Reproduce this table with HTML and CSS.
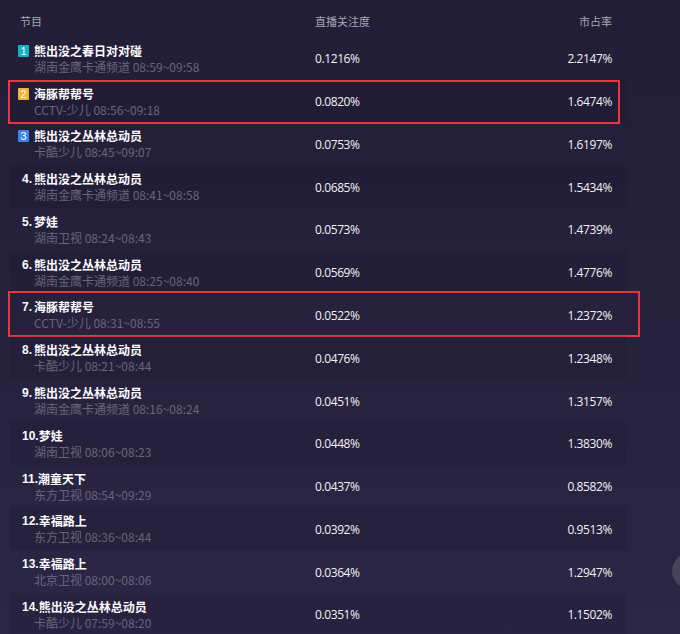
FILE: index.html
```html
<!DOCTYPE html>
<html lang="zh-CN">
<head>
<meta charset="utf-8">
<link rel="stylesheet" href="styles.css">
</head>
<body>
<div class="page">
  <div class="table">
    <div class="head">
      <div class="c1">节目</div>
      <div class="c2">直播关注度</div>
      <div class="c3">市占率</div>
    </div>

    <div class="row">
      <div class="c1"><div class="title"><span class="badge b1">1</span>熊出没之春日对对碰</div><div class="sub">湖南金鹰卡通频道 08:59~09:58</div></div>
      <div class="c2">0.1216%</div><div class="c3">2.2147%</div>
    </div>
    <div class="row alt">
      <div class="c1"><div class="title"><span class="badge b2">2</span>海豚帮帮号</div><div class="sub">CCTV-少儿 08:56~09:18</div></div>
      <div class="c2">0.0820%</div><div class="c3">1.6474%</div>
      <div class="mark m1"></div>
    </div>
    <div class="row">
      <div class="c1"><div class="title"><span class="badge b3">3</span>熊出没之丛林总动员</div><div class="sub">卡酷少儿 08:45~09:07</div></div>
      <div class="c2">0.0753%</div><div class="c3">1.6197%</div>
    </div>
    <div class="row alt">
      <div class="c1"><div class="title"><span class="num">4.</span>熊出没之丛林总动员</div><div class="sub">湖南金鹰卡通频道 08:41~08:58</div></div>
      <div class="c2">0.0685%</div><div class="c3">1.5434%</div>
    </div>
    <div class="row">
      <div class="c1"><div class="title"><span class="num">5.</span>梦娃</div><div class="sub">湖南卫视 08:24~08:43</div></div>
      <div class="c2">0.0573%</div><div class="c3">1.4739%</div>
    </div>
    <div class="row alt">
      <div class="c1"><div class="title"><span class="num">6.</span>熊出没之丛林总动员</div><div class="sub">湖南金鹰卡通频道 08:25~08:40</div></div>
      <div class="c2">0.0569%</div><div class="c3">1.4776%</div>
    </div>
    <div class="row">
      <div class="c1"><div class="title"><span class="num">7.</span>海豚帮帮号</div><div class="sub">CCTV-少儿 08:31~08:55</div></div>
      <div class="c2">0.0522%</div><div class="c3">1.2372%</div>
      <div class="mark m2"></div>
    </div>
    <div class="row alt">
      <div class="c1"><div class="title"><span class="num">8.</span>熊出没之丛林总动员</div><div class="sub">卡酷少儿 08:21~08:44</div></div>
      <div class="c2">0.0476%</div><div class="c3">1.2348%</div>
    </div>
    <div class="row">
      <div class="c1"><div class="title"><span class="num">9.</span>熊出没之丛林总动员</div><div class="sub">湖南金鹰卡通频道 08:16~08:24</div></div>
      <div class="c2">0.0451%</div><div class="c3">1.3157%</div>
    </div>
    <div class="row alt">
      <div class="c1"><div class="title"><span class="num wide">10.</span>梦娃</div><div class="sub">湖南卫视 08:06~08:23</div></div>
      <div class="c2">0.0448%</div><div class="c3">1.3830%</div>
    </div>
    <div class="row">
      <div class="c1"><div class="title"><span class="num wide">11.</span>潮童天下</div><div class="sub">东方卫视 08:54~09:29</div></div>
      <div class="c2">0.0437%</div><div class="c3">0.8582%</div>
    </div>
    <div class="row alt">
      <div class="c1"><div class="title"><span class="num wide">12.</span>幸福路上</div><div class="sub">东方卫视 08:36~08:44</div></div>
      <div class="c2">0.0392%</div><div class="c3">0.9513%</div>
    </div>
    <div class="row">
      <div class="c1"><div class="title"><span class="num wide">13.</span>幸福路上</div><div class="sub">北京卫视 08:00~08:06</div></div>
      <div class="c2">0.0364%</div><div class="c3">1.2947%</div>
    </div>
    <div class="row alt">
      <div class="c1"><div class="title"><span class="num wide">14.</span>熊出没之丛林总动员</div><div class="sub">卡酷少儿 07:59~08:20</div></div>
      <div class="c2">0.0351%</div><div class="c3">1.1502%</div>
    </div>
  </div>
  <div class="fab"></div>
</div>
</body>
</html>
```

FILE: styles.css
```css
* { box-sizing: border-box; }
html, body { margin: 0; padding: 0; }
body {
  width: 680px;
  height: 634px;
  overflow: hidden;
  background: linear-gradient(180deg, #221e36 0%, #26223d 50%, #2a2644 100%);
  font-family: "Noto Sans CJK SC", "Noto Sans", sans-serif;
  color: #fff;
}
.page {
  position: relative;
  width: 680px;
  height: 634px;
}
.table {
  width: 617px;
  margin-left: 10px;
  display: flex;
  flex-direction: column;
}
.head, .row {
  display: grid;
  grid-template-columns: 297px 150px 1fr;
  align-items: center;
  padding: 0 15px 0 8px;
}
.head {
  height: 37px;
  font-size: 11px;
  color: #a8a5b8;
  padding-top: 4px;
}
.head .c1 { padding-left: 2px; }
.row {
  position: relative;
  height: 42.77px;
}
.row.alt { background: rgba(20, 17, 38, 0.14); }
.c3 { text-align: right; }
.row .c2, .row .c3 {
  font-family: "Open Sans", "Noto Sans", sans-serif;
  font-size: 12px;
  letter-spacing: -0.4px;
  color: #f2f1f6;
  padding-top: 1px;
}
.title {
  display: flex;
  align-items: center;
  font-size: 12px;
  font-weight: bold;
  line-height: 16px;
  color: #fbfbfd;
}
.sub {
  font-size: 12px;
  line-height: 15px;
  color: #68657c;
  padding-left: 16px;
}
.badge {
  display: inline-flex;
  align-items: center;
  justify-content: center;
  width: 11px;
  height: 12px;
  border-radius: 1px;
  margin-right: 5px;
  font-family: "Liberation Sans", sans-serif;
  font-size: 11px;
  font-weight: normal;
  color: #fff;
}
.b1 { background: #19aec6; }
.b2 { background: #f2b33a; }
.b3 { background: #3a86e8; }
.num {
  display: inline-block;
  width: 16px;
  padding-left: 4px;
  font-family: "Liberation Sans", sans-serif;
  font-weight: bold;
}
.num.wide { width: auto; padding-left: 4px; }
.mark {
  position: absolute;
  border: 2px solid #e8363f;
  pointer-events: none;
}
.m1 { left: -2px; top: 0; width: 612px; height: 44px; }
.m2 { left: -2px; top: -3px; width: 632px; height: 46px; }
.fab {
  position: absolute;
  left: 672px;
  top: 553px;
  width: 36px;
  height: 36px;
  border-radius: 50%;
  background: #48435d;
}
```
